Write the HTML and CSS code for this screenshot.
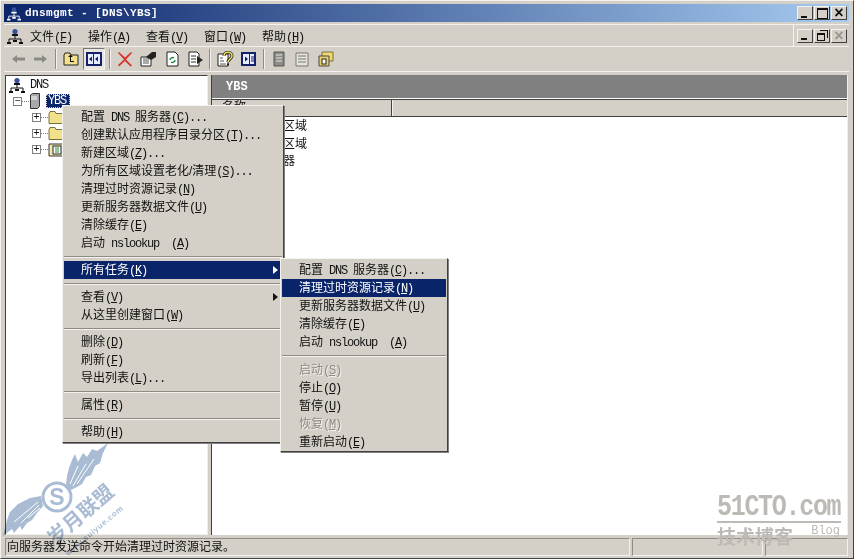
FILE: index.html
```html
<!DOCTYPE html>
<html lang="zh-CN">
<head>
    <meta charset="UTF-8" />
    <title>dnsmgmt</title>
    <link rel="stylesheet" href="styles.css">
</head>
<body>

<svg class="defs" width="0" height="0">
    <symbol id="i-net" viewBox="0 0 16 16">
        <circle cx="8" cy="3.500" r="2.600" fill="#3a4f9a"/>
        <rect x="5" y="6" width="6" height="2" fill="currentColor"/>
        <path d="M8 8v3M2 14v-3h12v3" fill="none" stroke="currentColor"/>
        <rect x="0" y="14" width="4" height="2" fill="currentColor"/>
        <rect x="6" y="12" width="4" height="2" fill="currentColor"/>
        <rect x="12" y="14" width="4" height="2" fill="currentColor"/>
    </symbol>
    <symbol id="i-folder" viewBox="0 0 16 16">
        <path d="M1 4.500l1-2h5l1 2h7v10H1z" fill="#f3e08a" stroke="#77703c"/>
    </symbol>
    <symbol id="i-log" viewBox="0 0 16 16">
        <path d="M1 3h14v12H1z" fill="#f3e9b0" stroke="#333"/>
        <rect x="5" y="5" width="8" height="8" fill="#fff" stroke="#222"/>
        <path d="M7 7h4M7 9h4M7 11h4" stroke="#1e8a3c"/>
    </symbol>
    <symbol id="i-server" viewBox="0 0 12 16">
        <path d="M1.500 2l2-1.500h7v13l-2 2h-7z" fill="#a8a8a8" stroke="#333"/>
        <path d="M2 4h6M2 6h6" stroke="#fff"/>
    </symbol>
</svg>

<div class="window">
    <div class="titlebar">
        <svg class="title-icon"><use href="#i-net"/></svg>
        <span class="title-text">dnsmgmt - [DNS\YBS]</span>
        <div class="wbtns">
            <span class="wbtn"><i class="b-min"></i></span>
            <span class="wbtn"><i class="b-max"></i></span>
            <span class="wbtn b-close">×</span>
        </div>
    </div>

    <div class="menubar">
        <svg class="menu-icon"><use href="#i-net"/></svg>
        <span class="mi">文件<span class="en">(<u>F</u>)</span></span>
        <span class="mi">操作<span class="en">(<u>A</u>)</span></span>
        <span class="mi">查看<span class="en">(<u>V</u>)</span></span>
        <span class="mi">窗口<span class="en">(<u>W</u>)</span></span>
        <span class="mi">帮助<span class="en">(<u>H</u>)</span></span>
        <div class="wbtns mdi">
            <span class="wbtn"><i class="b-min"></i></span>
            <span class="wbtn"><i class="b-restore"></i></span>
            <span class="wbtn b-close off">×</span>
        </div>
    </div>

    <div class="toolbar">
        <svg class="tb w13" viewBox="0 0 13 16"><path d="M0 8l5-4v2.500h8v3H5V12z" fill="#8b8b85"/></svg>
        <svg class="tb w13 gap9" viewBox="0 0 13 16"><path d="M13 8L8 4v2.500H0v3h8V12z" fill="#8b8b85"/></svg>
        <span class="tsep ml8"></span>
        <svg class="tb w16" viewBox="0 0 16 16"><path d="M1 4l1-2h5l1 2h7v10H1z" fill="#f3e08a" stroke="#222"/><path d="M11 11H7V6H5l2.500-2.500L10 6H8v4h3" fill="#111"/></svg>
        <span class="tb-pressed">
            <svg class="tb w16" viewBox="0 0 16 16"><rect x="1" y="2" width="14" height="12" fill="#e8ecff" stroke="#14206a" stroke-width="2"/><rect x="7" y="3" width="1" height="10" fill="#14206a"/><path d="M6 5.500v5L3 8zM9 8l3-2.500v5z" fill="#14206a"/></svg>
        </span>
        <span class="tsep ml4"></span>
        <svg class="tb w16" viewBox="0 0 16 16"><path d="M2 1l6 5.500L14 1l1 1-6 6.500 6 6-1.500 1L8 10l-6 5.500L1 14l6-5.500L1 2z" fill="#d8332a"/></svg>
        <svg class="tb w17 gap7" viewBox="0 0 17 16"><path d="M1 6h10v9H1z" fill="#fff" stroke="#222"/><path d="M3 8h6M3 10h6M3 12h6" stroke="#555"/><path d="M6 6l6-5h4v5l-5 3z" fill="#222"/></svg>
        <svg class="tb w13 gap9" viewBox="0 0 13 16"><path d="M1 1h8l3 3v11H1z" fill="#fff" stroke="#222"/><path d="M4 9a2.500 2.500 0 0 1 4-2M9 9a2.500 2.500 0 0 1-4 2" fill="none" stroke="#1e8a3c" stroke-width="1.400"/></svg>
        <svg class="tb w16 gap9" viewBox="0 0 16 16"><path d="M1 1h8l2 2v12H1z" fill="#fff" stroke="#222"/><path d="M3 5h5M3 8h5M3 11h5" stroke="#333"/><path d="M9 5l6 4-6 4z" fill="#222"/></svg>
        <span class="tsep"></span>
        <svg class="tb w17" viewBox="0 0 17 16"><path d="M1 3h10v12H1z" fill="#fff" stroke="#222"/><path d="M3 7h3M3 10h4M3 13h6" stroke="#555"/><path d="M7 5c0-5 8-5 8 0 0 3-4 3-4 6" fill="none" stroke="#222" stroke-width="3"/><path d="M7 5c0-5 8-5 8 0 0 3-4 3-4 6" fill="none" stroke="#f0e060" stroke-width="1.500"/><rect x="10" y="12.500" width="2" height="2" fill="#222"/></svg>
        <svg class="tb w15 gap7" viewBox="0 0 15 16"><rect x="1" y="2" width="13" height="12" fill="#e8ecff" stroke="#14206a" stroke-width="2"/><rect x="8" y="3" width="1" height="10" fill="#14206a"/><path d="M4 5.500v5L7 8z" fill="#14206a"/><path d="M10 6h3M10 8h3M10 10h3" stroke="#14206a"/></svg>
        <span class="tsep ml7"></span>
        <svg class="tb w12" viewBox="0 0 12 16"><path d="M1 1h10v14H1z" fill="#8c8c88" stroke="#555"/><path d="M3 4h6M3 7h6M3 10h6" stroke="#e4e2dc"/></svg>
        <svg class="tb w14 gap10" viewBox="0 0 14 16"><path d="M1 2h12v13H1z" fill="#e6e4de" stroke="#77766f"/><path d="M3 5h8M3 8h8M3 11h8" stroke="#77766f"/></svg>
        <svg class="tb w16 gap9" viewBox="0 0 16 16"><path d="M4 1h11v9H4z" fill="#f0d870" stroke="#77703c"/><path d="M1 5h10v10H1z" fill="#e9d36a" stroke="#444"/><rect x="4" y="8" width="4" height="5" fill="#fff" stroke="#222"/></svg>
    </div>

    <div class="panes">
        <div class="tree">
            <div class="row"><svg class="ico16"><use href="#i-net"/></svg><span class="en">DNS</span></div>
            <div class="row lvl1">
                <span class="exp">−</span><span class="dots"></span>
                <svg class="ico-srv"><use href="#i-server"/></svg>
                <span class="sel en">YBS</span>
            </div>
            <div class="row lvl2"><span class="exp">+</span><span class="dots"></span><svg class="ico16"><use href="#i-folder"/></svg></div>
            <div class="row lvl2"><span class="exp">+</span><span class="dots"></span><svg class="ico16"><use href="#i-folder"/></svg></div>
            <div class="row lvl2"><span class="exp">+</span><span class="dots"></span><svg class="ico16"><use href="#i-log"/></svg></div>
        </div>
        <div class="detail">
            <div class="detail-head"><span class="en">YBS</span></div>
            <div class="columns">
                <span class="col col-name">名称</span>
                <span class="col col-rest"></span>
            </div>
            <ul class="list">
                <li>正向查找区域</li>
                <li>反向查找区域</li>
                <li>事件查看器</li>
            </ul>
        </div>
    </div>

    <div class="statusbar">
        <span class="st st-main">向服务器发送命令开始清理过时资源记录。</span>
        <span class="st st-mid"></span>
        <span class="st st-end"></span>
    </div>
</div>

<!-- 右键菜单 -->
<div class="menu menu-main">
    <div class="item">配置<span class="en"> DNS </span>服务器<span class="en">(<u>C</u>)...</span></div>
    <div class="item">创建默认应用程序目录分区<span class="en">(<u>T</u>)...</span></div>
    <div class="item">新建区域<span class="en">(<u>Z</u>)...</span></div>
    <div class="item">为所有区域设置老化/清理<span class="en">(<u>S</u>)...</span></div>
    <div class="item">清理过时资源记录<span class="en">(<u>N</u>)</span></div>
    <div class="item">更新服务器数据文件<span class="en">(<u>U</u>)</span></div>
    <div class="item">清除缓存<span class="en">(<u>E</u>)</span></div>
    <div class="item">启动<span class="en"> nslookup  (<u>A</u>)</span></div>
    <div class="sep"></div>
    <div class="item active has-sub">所有任务<span class="en">(<u>K</u>)</span></div>
    <div class="sep"></div>
    <div class="item has-sub">查看<span class="en">(<u>V</u>)</span></div>
    <div class="item">从这里创建窗口<span class="en">(<u>W</u>)</span></div>
    <div class="sep"></div>
    <div class="item">删除<span class="en">(<u>D</u>)</span></div>
    <div class="item">刷新<span class="en">(<u>F</u>)</span></div>
    <div class="item">导出列表<span class="en">(<u>L</u>)...</span></div>
    <div class="sep"></div>
    <div class="item">属性<span class="en">(<u>R</u>)</span></div>
    <div class="sep"></div>
    <div class="item">帮助<span class="en">(<u>H</u>)</span></div>
</div>

<div class="menu menu-sub">
    <div class="item">配置<span class="en"> DNS </span>服务器<span class="en">(<u>C</u>)...</span></div>
    <div class="item active">清理过时资源记录<span class="en">(<u>N</u>)</span></div>
    <div class="item">更新服务器数据文件<span class="en">(<u>U</u>)</span></div>
    <div class="item">清除缓存<span class="en">(<u>E</u>)</span></div>
    <div class="item">启动<span class="en"> nslookup  (<u>A</u>)</span></div>
    <div class="sep sep-tall"></div>
    <div class="item off">启动<span class="en">(<u>S</u>)</span></div>
    <div class="item">停止<span class="en">(<u>O</u>)</span></div>
    <div class="item">暂停<span class="en">(<u>U</u>)</span></div>
    <div class="item off">恢复<span class="en">(<u>M</u>)</span></div>
    <div class="item">重新启动<span class="en">(<u>E</u>)</span></div>
</div>

<!-- 水印 -->
<svg class="mark-wing" width="130" height="119" viewBox="0 0 130 119">
    <!-- 右翼 -->
    <path class="wing" d="M108 3L103 13 100 23 95 26 91 35 86 37 82 44 77 47 69 51 66 46 67 36 69 28 72 20 75 14 78 22 83 13 87 17 92 9 97 11z"/>
    <path class="feather" d="M70 44L78 26M73 46L86 24M77 44L94 19"/>
    <!-- 左翼 -->
    <path class="wing" d="M41 56L30 58 18 64 10 72 7 80 3 96 12 89 14 93 20 86 22 90 27 83 32 80 37 73 43 66z"/>
    <path class="feather" d="M38 62L14 82M39 65L21 83M40 68L28 78"/>
    <circle class="ring" cx="57" cy="57" r="14"/>
    <text x="57" y="65" class="mark-s">S</text>
    <text x="55" y="106" class="mark-cn" transform="rotate(-41 55 106)">岁月联盟</text>
    <text x="68" y="116" class="mark-url" transform="rotate(-40 68 116)">www.suiyue.com</text>
</svg>

<div class="mark-blog">
    <div class="mark-51">51CTO.com</div>
    <div class="mark-rule"></div>
    <div class="mark-foot"><span>技术博客</span><span class="mark-b">Blog</span></div>
</div>

</body>
</html>
```

FILE: styles.css
```css
html, body {
    margin:0;
    height:100%;
    overflow:hidden;
}

body {
    background:#d4d0c8;
    font-family:"Liberation Sans", "Noto Sans CJK SC", sans-serif;
    font-size:12px;
    color:#111;
}

.defs {
    position:absolute;
}

/* 中文 12px，西文点阵宽度 6px */
.en {
    font-family:"Liberation Mono", "Noto Sans CJK SC", monospace;
    letter-spacing:-1.2px;
    white-space:pre;
}

.window {
    height:559px;
    box-sizing:border-box;
    display:flex;
    flex-direction:column;
    border:1px solid #f4f2ee;
    border-right-color:#444;
    border-bottom-color:#444;
    padding:3px 4px 2px 3px;
}

.titlebar {
    height:18px;
    flex:none;
    display:flex;
    align-items:center;
    padding:0 2px 0 3px;
    background:linear-gradient(to right, #0a246a, #a6caf0);
    color:#fff;
}

.title-icon {
    width:14px;
    height:15px;
}

.title-text {
    margin-left:4px;
    font-family:"Liberation Mono", monospace;
    font-size:11px;
    font-weight:bold;
    letter-spacing:0.4px;
    white-space:pre;
}

.wbtns {
    margin-left:auto;
    display:flex;
    gap:1px;
}

.wbtn {
    width:16px;
    height:14px;
    box-sizing:border-box;
    background:#d4d0c8;
    border:1px solid #f4f2ee;
    border-right-color:#404040;
    border-bottom-color:#404040;
    color:#111;
    display:flex;
    align-items:center;
    justify-content:center;
    position:relative;
}

.b-close {
    font-size:16px;
    line-height:12px;
    font-family:"Liberation Sans", sans-serif;
    font-weight:bold;
}

.b-close.off {
    color:#98958e;
}

.b-min {
    width:6px;
    height:2px;
    background:#111;
    margin-top:7px;
    margin-right:3px;
}

.b-max {
    width:9px;
    height:8px;
    border:1px solid #111;
    border-top-width:2px;
}

.b-restore {
    width:6px;
    height:5px;
    border:1px solid #111;
    border-top-width:2px;
    background:#d4d0c8;
    margin:3px 2px 0 0;
    box-shadow:2px -2px 0 0 #d4d0c8, 3px -3px 0 0 #111;
}

.menubar {
    height:23px;
    flex:none;
    margin-top:2px;
    display:flex;
    align-items:center;
    box-sizing:border-box;
    border-top:1px solid #f4f2ee;
    border-bottom:1px solid #f4f2ee;
    padding-left:3px;
}

.menu-icon {
    width:16px;
    height:16px;
    margin-right:7px;
}

.mi {
    width:58px;
    flex:none;
}

.mdi {
    border-left:1px solid #f4f2ee;
    height:100%;
    align-items:center;
    padding:0 2px 0 3px;
}

.toolbar {
    height:25px;
    flex:none;
    display:flex;
    align-items:center;
    box-sizing:border-box;
    border-bottom:1px solid #f4f2ee;
    padding-left:8px;
}

.tb {
    height:16px;
    flex:none;
}

.w12 { width:12px; margin-left:2px; }
.w13 { width:13px; }
.w14 { width:14px; }
.w15 { width:15px; }
.w16 { width:16px; }
.w17 { width:17px; }
.gap7 { margin-left:7px; }
.gap9 { margin-left:9px; }
.gap10 { margin-left:10px; }

.tsep {
    width:1px;
    height:20px;
    background:#8f8c85;
    border-right:1px solid #f4f2ee;
    margin:0 6px 0 5px;
    flex:none;
}

.tsep.ml4 { margin-left:4px; }
.tsep.ml7 { margin-left:7px; }
.tsep.ml8 { margin-left:8px; }

.tb-pressed {
    width:22px;
    height:22px;
    margin-left:4px;
    display:flex;
    align-items:center;
    justify-content:center;
    background:#e9e7e2;
    border:1px solid #77766f;
    border-right-color:#f4f2ee;
    border-bottom-color:#f4f2ee;
    box-sizing:border-box;
}

.panes {
    flex:1;
    min-height:0;
    margin-top:3px;
    display:flex;
    gap:3px;
}

.tree {
    width:203px;
    margin-left:1px;
    flex:none;
    box-sizing:border-box;
    background:#fff;
    border:1px solid #404040;
    border-right-color:#eee;
    border-bottom-color:#eee;
    padding:1px 0 0 3px;
}

.row {
    height:16px;
    display:flex;
    align-items:center;
}

.ico16 {
    width:16px;
    height:16px;
    flex:none;
}

.row > .en {
    margin-left:5px;
}

.lvl1 {
    padding-left:4px;
}

.lvl2 {
    padding-left:23px;
}

.exp {
    width:9px;
    height:9px;
    box-sizing:border-box;
    border:1px solid #808080;
    font:10px/7px "Liberation Mono", monospace;
    letter-spacing:0;
    text-align:center;
    flex:none;
}

.dots {
    width:7px;
    border-top:1px dotted #808080;
    flex:none;
}

.ico-srv {
    width:12px;
    height:16px;
    flex:none;
}

.lvl1 .sel {
    margin-left:5px;
    background:#0a246a;
    color:#fff;
    padding:0 4px 0 2px;
    outline:1px dotted #d4d0c8;
    outline-offset:-1px;
}

.detail {
    flex:1;
    min-width:0;
    margin-right:1px;
    display:flex;
    flex-direction:column;
    background:#fff;
    border-right:1px solid #eee;
    border-left:1px solid #404040;
}

.detail-head {
    height:23px;
    flex:none;
    background:#808080;
    color:#fff;
    display:flex;
    align-items:center;
    padding-left:14px;
    font-weight:bold;
}

.detail-head .en {
    letter-spacing:0;
}

.columns {
    margin-top:1px;
    height:18px;
    flex:none;
    display:flex;
    background:#d4d0c8;
    border-top:1px solid #404040;
    border-bottom:1px solid #404040;
    box-sizing:border-box;
}

.col {
    box-sizing:border-box;
    padding-left:10px;
    line-height:14px;
}

.col-name {
    width:180px;
    border-right:1px solid #404040;
}

.col-rest {
    flex:1;
    border-left:1px solid #f4f2ee;
}

.list {
    list-style:none;
    margin:0;
    padding:0 0 0 23px;
}

.list li {
    height:18px;
    line-height:18px;
}

.list li:last-child {
    margin-top:-1px;
}

.statusbar {
    height:18px;
    flex:none;
    margin-top:3px;
    display:flex;
    gap:2px;
    padding-left:1px;
}

.st {
    box-sizing:border-box;
    border:1px solid #8f8c85;
    border-right-color:#f4f2ee;
    border-bottom-color:#f4f2ee;
    line-height:16px;
    padding-left:1px;
}

.st-main { width:625px; }
.st-mid { width:131px; }
.st-end { flex:1; margin-right:1px; }

.menu {
    position:absolute;
    box-sizing:border-box;
    background:#d4d0c8;
    border:1px solid #f4f2ee;
    border-right-color:#404040;
    border-bottom-color:#404040;
    padding:2px 1px 1px;
    box-shadow:1px 1px 0 #808080;
}

.menu-main {
    left:62px;
    top:105px;
    width:222px;
    height:338px;
}

.menu-sub {
    left:280px;
    top:258px;
    width:168px;
    height:194px;
}

.item {
    height:18px;
    line-height:18px;
    padding-left:17px;
    position:relative;
    white-space:nowrap;
}

.item.active {
    background:#0a246a;
    color:#fff;
}

.item.off {
    color:#8f8c85;
    text-shadow:1px 1px 0 #f4f2ee;
}

.has-sub::after {
    content:"";
    position:absolute;
    right:4px;
    top:5px;
    border-left:5px solid #111;
    border-top:4px solid transparent;
    border-bottom:4px solid transparent;
}

.item.active.has-sub::after {
    border-left-color:#fff;
}

.sep {
    height:9px;
    box-sizing:border-box;
    padding-top:4px;
}

.sep::before {
    content:"";
    display:block;
    border-top:1px solid #8f8c85;
    border-bottom:1px solid #f4f2ee;
}

.sep-tall {
    height:10px;
}

/* 水印叠在窗口之上 */
.mark-wing {
    position:absolute;
    left:0;
    top:440px;
    mix-blend-mode:multiply;
}

.wing {
    fill:#a9bcd4;
}

.feather {
    fill:none;
    stroke:#fff;
    stroke-width:1;
}

.ring {
    fill:#fff;
    stroke:#a9bcd4;
    stroke-width:3;
}

.mark-s {
    font:bold 23px "Liberation Sans", sans-serif;
    fill:#a9bcd4;
    text-anchor:middle;
}

.mark-cn {
    font:bold 20px "Noto Sans CJK SC", sans-serif;
    fill:#a9bcd4;
}

.mark-url {
    font:bold 8px "Liberation Sans", sans-serif;
    fill:#a9bcd4;
    letter-spacing:0.6px;
}

.mark-blog {
    position:absolute;
    left:717px;
    top:494px;
    width:124px;
    color:#bdbab6;
}

.mark-51 {
    font:bold 25px/24px "Liberation Mono", monospace;
    letter-spacing:-1.300px;
    white-space:nowrap;
    transform:scaleY(1.150);
    transform-origin:top;
}

.mark-rule {
    height:2px;
    background:#bdbab6;
    margin-top:3px;
}

.mark-foot {
    display:flex;
    align-items:flex-start;
    justify-content:space-between;
    font:bold 19px/24px "Noto Sans CJK SC", sans-serif;
    margin-top:1px;
}

.mark-b {
    font:12px/15px "Liberation Mono", monospace;
    margin-right:1px;
}
```
